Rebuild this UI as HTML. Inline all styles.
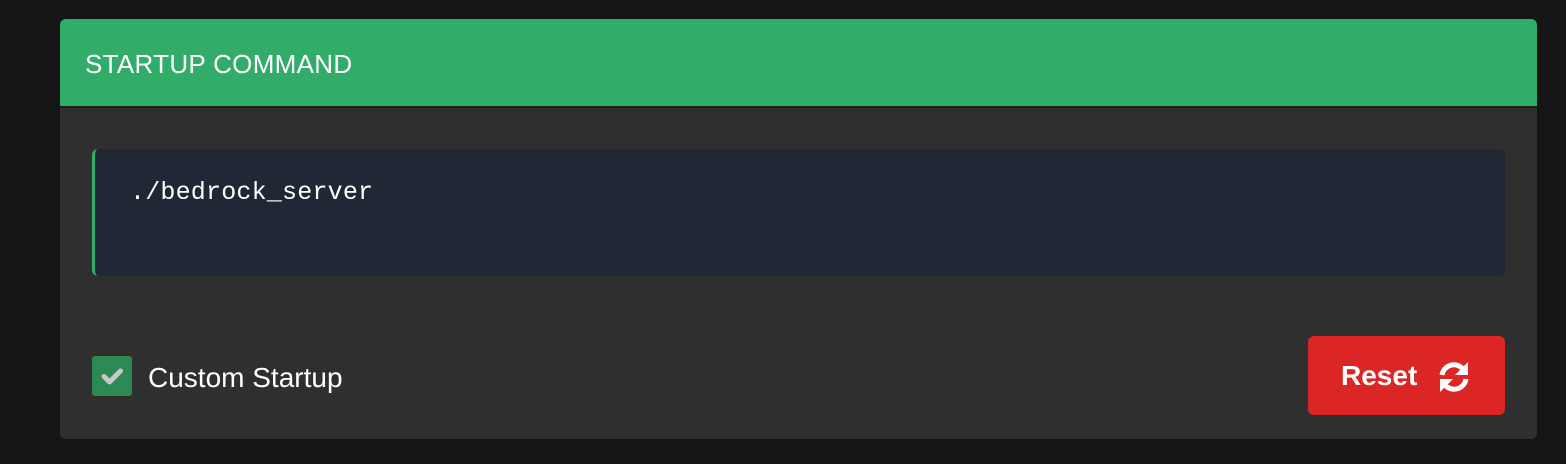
<!DOCTYPE html>
<html><head><style>
body{margin:0;width:1566px;height:464px;background:#151515;position:relative;overflow:hidden;font-family:"Liberation Sans",sans-serif}
.card{position:absolute;left:60px;top:19px;width:1477px;height:420px;background:#2f2f2f;border-radius:6px;overflow:hidden}
.hd{position:absolute;left:0;top:0;width:100%;height:87px;background:#32ad69;border-bottom:2px solid #1d1d1d}
.hd span{position:absolute;left:25px;top:30px;color:#fff;font-size:26px;line-height:30px;letter-spacing:0.3px}
.code{position:absolute;left:32px;top:130px;width:1410px;height:127px;background:#1f2834;border-left:3px solid #32ad69;border-radius:6px}
.code span{position:absolute;left:35px;top:29px;color:#fff;font-family:"Liberation Mono",monospace;font-size:25px;line-height:30px;letter-spacing:0.2px}
.cb{position:absolute;left:32px;top:337px;width:40px;height:40px;background:#2e8a55;border-radius:3px}
.lbl{position:absolute;left:88px;top:343px;color:#fff;font-size:28px;line-height:32px}
.btn{position:absolute;left:1248px;top:317px;width:197px;height:79px;background:#dc2626;border-radius:6px}
.btn span{position:absolute;left:33px;top:24px;color:#fff;font-weight:bold;font-size:28px;line-height:32px}
</style></head><body>
<div class="card">
<div class="hd"><span>STARTUP COMMAND</span></div>
<div class="code"><span>./bedrock_server</span></div>
<div class="cb"><svg width="40" height="40" viewBox="0 0 40 40"><path d="M12 20.5l5.5 5.5 11-11" fill="none" stroke="#c8c8c8" stroke-width="5" stroke-linecap="round" stroke-linejoin="round"/></svg></div>
<div class="lbl">Custom Startup</div>
<div class="btn"><span>Reset</span>
<svg style="position:absolute;left:129px;top:24px" width="34" height="34" viewBox="0 0 34 34">
<path d="M5 15A12 12 0 0 1 26 9" fill="none" stroke="#fff" stroke-width="5"/>
<path d="M31 2v13h-13z" fill="#fff"/>
<path d="M29 19A12 12 0 0 1 8 25" fill="none" stroke="#fff" stroke-width="5"/>
<path d="M3 32v-13h13z" fill="#fff"/>
</svg></div>
</div>
</body></html>
